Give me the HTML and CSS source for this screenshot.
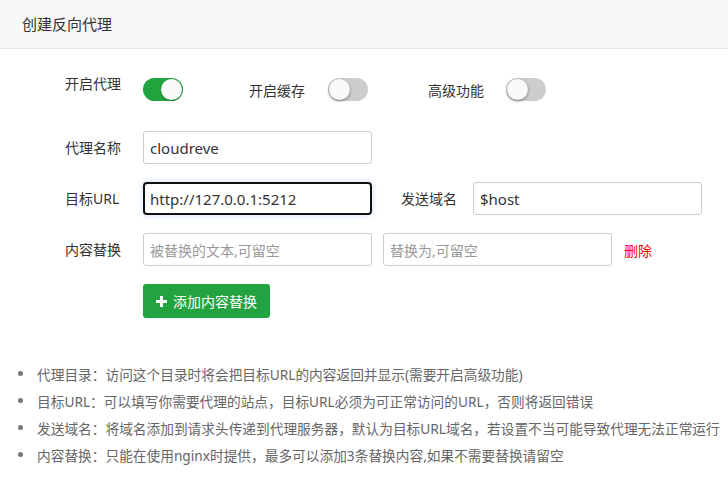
FILE: index.html
```html
<!DOCTYPE html>
<html lang="zh-CN">

<head>
    <meta charset="utf-8">
    <title>创建反向代理</title>
    <link rel="stylesheet" href="styles.css">
</head>

<body>
    <div class="header">创建反向代理</div>

    <div class="form">
        <div class="row switches">
            <span class="label first">开启代理</span>
            <span class="switch on"><i></i></span>
            <span class="label cache">开启缓存</span>
            <span class="switch"><i></i></span>
            <span class="label adv">高级功能</span>
            <span class="switch"><i></i></span>
        </div>

        <div class="row">
            <span class="label">代理名称</span>
            <input type="text" value="cloudreve">
        </div>

        <div class="row">
            <span class="label">目标URL</span>
            <input type="text" class="focus" value="http://127.0.0.1:5212">
            <span class="label side">发送域名</span>
            <input type="text" value="$host">
        </div>

        <div class="row">
            <span class="label">内容替换</span>
            <input type="text" placeholder="被替换的文本,可留空">
            <input type="text" class="second" placeholder="替换为,可留空">
            <a class="del">删除</a>
        </div>

        <div class="row">
            <span class="label"></span>
            <button class="add">
                <svg width="11" height="11" viewBox="0 0 11 11"><path d="M4 0h3v4h4v3H7v4H4V7H0V4h4z" fill="#fff"/></svg>
                添加内容替换
            </button>
        </div>
    </div>

    <ul class="tips">
        <li>代理目录：访问这个目录时将会把目标URL的内容返回并显示(需要开启高级功能)</li>
        <li>目标URL：可以填写你需要代理的站点，目标URL必须为可正常访问的URL，否则将返回错误</li>
        <li>发送域名：将域名添加到请求头传递到代理服务器，默认为目标URL域名，若设置不当可能导致代理无法正常运行</li>
        <li>内容替换：只能在使用nginx时提供，最多可以添加3条替换内容,如果不需要替换请留空</li>
    </ul>
</body>

</html>
```

FILE: styles.css
```css
* {
    box-sizing: border-box;
}

body {
    margin: 0;
    background: #fff;
    color: #333;
    font-family: "Noto Sans", "Noto Sans CJK SC", sans-serif;
    font-size: 14px;
}

.header {
    height: 49px;
    padding: 0 22px;
    line-height: 48px;
    font-size: 15px;
    background: #f7f7f7;
    border-bottom: 1px solid #e8e8e8;
}

.form {
    padding: 29px 0 0 65px;
}

.row {
    display: flex;
    align-items: center;
    height: 33px;
    margin-bottom: 18px;
}

.label {
    width: 78px;
    line-height: 18px;
    white-space: nowrap;
}

.switches {
    height: 23px;
    margin-bottom: 30px;
}

.switches .first {
    align-self: flex-start;
    margin-top: -3px;
}

.switches .cache {
    width: auto;
    margin: 2px 23px 0 66px;
}

.switches .adv {
    width: auto;
    margin: 2px 22px 0 60px;
}

.switch {
    position: relative;
    width: 40px;
    height: 23px;
    border-radius: 12px;
    background: #cdcdcd;

    & i {
        position: absolute;
        top: 1px;
        left: 1px;
        width: 21px;
        height: 21px;
        border-radius: 50%;
        background: #fafafa;
        box-shadow: 0 1px 3px rgba(0, 0, 0, .45);
    }
}

.switch.on {
    background: #21a33e;

    & i {
        left: 18px;
        box-shadow: 0 1px 2px rgba(0, 0, 0, .25);
    }
}

input {
    width: 229px;
    height: 33px;
    padding: 0 6px;
    border: 1px solid #ccc;
    border-radius: 3px;
    outline: none;
    color: #333;
    font-family: inherit;
    font-size: 15px;

    &::placeholder {
        color: #999;
        font-size: 14px;
    }
}

input.focus {
    border: 2px solid #111;
    border-radius: 4px;
    padding: 0 5px;
    box-shadow: 0 0 6px rgba(110, 160, 240, .35);
}

.side {
    width: 72px;
    margin-left: 29px;
}

input.second {
    margin-left: 11px;
}

.del {
    margin-left: 12px;
    color: #f00;
    cursor: pointer;
}

.add {
    display: flex;
    align-items: center;
    gap: 6px;
    width: 127px;
    height: 34px;
    margin-top: 1px;
    padding: 0 12px 0 13px;
    border: none;
    border-radius: 3px;
    background: #22a33f;
    color: #fff;
    font-family: inherit;
    font-size: 14px;
    cursor: pointer;
}

.tips {
    margin: 43px 0 0;
    padding: 0 0 0 18px;
    list-style: none;
    color: #666;
    font-size: 13.7px;

    & li {
        display: flex;
        align-items: center;
        height: 27px;
        white-space: nowrap;
    }

    & li::before {
        content: "";
        flex: none;
        width: 5px;
        height: 5px;
        margin-right: 14px;
        border-radius: 50%;
        background: #777;
    }
}
```
